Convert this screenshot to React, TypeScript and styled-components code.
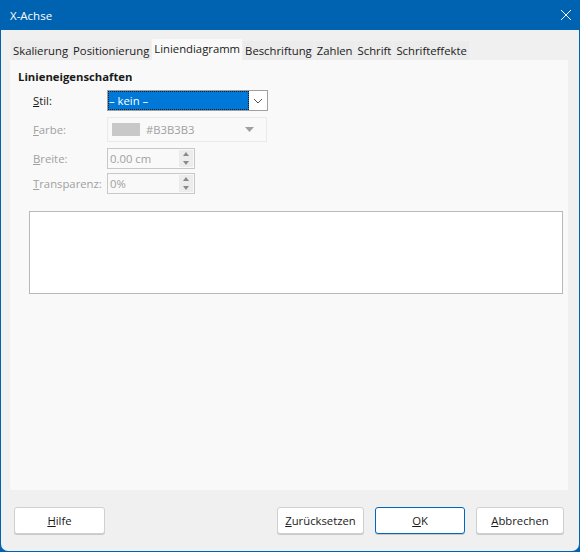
import React from 'react';
import styled, { createGlobalStyle } from 'styled-components';

const Global = createGlobalStyle`
  html, body { margin: 0; padding: 0; background: #0063b1; }
  body { font-family: 'Open Sans', 'Noto Sans', sans-serif; font-size: 11.3px; color: #1a1a1a; }
`;

const Frame = styled.div`
  width: 580px;
  height: 552px;
  box-sizing: border-box;
  display: flex;
  flex-direction: column;
  background: #0063b1;
  border-radius: 8px;
  overflow: hidden;
`;

const TitleBar = styled.div`
  height: 30px;
  flex: none;
  display: flex;
  align-items: center;
  justify-content: space-between;
  padding: 0 9px 0 10px;
  color: #fff;
  font-size: 11.5px;
`;

const Body = styled.div`
  flex: 1;
  margin: 0 1px 1px 1px;
  background: #f0f0f0;
  border-radius: 0 0 7px 7px;
  display: flex;
  flex-direction: column;
  padding: 10px 11px 0 9px;
`;

const TabRow = styled.div`
  display: flex;
  align-items: flex-end;
  height: 20px;
  padding-left: 1px;
`;

const Tab = styled.div<{ $active?: boolean }>`
  height: ${p => (p.$active ? '21px' : '19px')};
  line-height: ${p => (p.$active ? '20px' : '19px')};
  padding: 0 2px;
  margin-right: 1px;
  background: ${p => (p.$active ? '#f9f9f9' : '#ececec')};
  position: relative;
  z-index: ${p => (p.$active ? 1 : 0)};
  white-space: nowrap;
`;

const Panel = styled.div`
  height: 430px;
  background: #f9f9f9;
  padding: 9px 0 0 8px;
  box-sizing: border-box;
  display: flex;
  flex-direction: column;
`;

const Heading = styled.div`
  font-weight: 700;
  margin-bottom: 6px;
`;

const Grid = styled.div`
  display: grid;
  grid-template-columns: 74px auto;
  row-gap: 4px;
  padding-left: 15px;
  align-items: center;
  justify-items: start;
`;

const Label = styled.div<{ $disabled?: boolean }>`
  color: ${p => (p.$disabled ? '#a0a0a0' : '#1a1a1a')};
  u { text-decoration-thickness: 1px; }
`;

const Select = styled.div`
  width: 161px;
  height: 21px;
  box-sizing: border-box;
  border: 1px solid #a0a0a0;
  background: #fff;
  display: flex;
`;

const SelectValue = styled.div`
  flex: 1;
  background: #0078d7;
  color: #fff;
  outline: 1px dotted #1a1a1a;
  outline-offset: -1px;
  padding-left: 1px;
  line-height: 19px;
`;

const SelectButton = styled.div`
  width: 18px;
  display: flex;
  align-items: center;
  justify-content: center;
`;

const ColorBox = styled.div`
  width: 160px;
  height: 25px;
  margin: 2px 0;
  box-sizing: border-box;
  border: 1px solid #eaeaea;
  display: flex;
  align-items: center;
  padding: 0 12px 0 4px;
  gap: 6px;
  color: #a0a0a0;
`;

const Swatch = styled.div`
  width: 28px;
  height: 13px;
  background: #c8c8c8;
`;

const ColorName = styled.span`
  flex: 1;
`;

const Spin = styled.div`
  width: 88px;
  height: 21px;
  box-sizing: border-box;
  border: 1px solid #c8c8c8;
  background: #f9f9f9;
  display: flex;
  color: #a0a0a0;
`;

const SpinText = styled.div`
  flex: 1;
  padding-left: 2px;
  line-height: 19px;
`;

const SpinButtons = styled.div`
  width: 14px;
  margin: 1px;
  background: #ececec;
  display: flex;
  flex-direction: column;
  align-items: center;
  justify-content: space-around;
`;

const Preview = styled.div`
  margin: 17px 5px 0 11px;
  height: 81px;
  background: #fff;
  border: 1px solid #b9b9b9;
`;

const Footer = styled.div`
  flex: 1;
  display: flex;
  align-items: center;
  padding: 0 4px 0 4px;
  gap: 11px;
`;

const Spacer = styled.div`
  flex: 1;
`;

const Button = styled.div<{ $default?: boolean; $w: number }>`
  width: ${p => p.$w}px;
  height: 27px;
  box-sizing: border-box;
  border: 1px solid ${p => (p.$default ? '#0067c0' : '#d0d0d0')};
  border-radius: 3px;
  background: #fff;
  display: flex;
  align-items: center;
  justify-content: center;
  box-shadow: 0 1px 0 #c8c8c8;
`;

const Chevron = () => (
  <svg width="10" height="6" viewBox="0 0 10 6">
    <path d="M1 1l4 4 4-4" fill="none" stroke="#555" strokeWidth="1" />
  </svg>
);

const Up = () => (
  <svg width="6" height="4" viewBox="0 0 6 4"><path d="M0 4L3 0L6 4Z" fill="#8a8a8a" /></svg>
);
const Down = () => (
  <svg width="6" height="4" viewBox="0 0 6 4"><path d="M0 0L3 4L6 0Z" fill="#8a8a8a" /></svg>
);
const DropArrow = () => (
  <svg width="9" height="5" viewBox="0 0 9 5"><path d="M0 0L4.5 5L9 0Z" fill="#a0a0a0" /></svg>
);

const Close = () => (
  <svg width="10" height="10" viewBox="0 0 10 10">
    <path d="M0 0L10 10M10 0L0 10" stroke="#fff" strokeWidth="1" />
  </svg>
);

const tabs = ['Skalierung', 'Positionierung', 'Liniendiagramm', 'Beschriftung', 'Zahlen', 'Schrift', 'Schrifteffekte'];

const App = () => (
  <Frame>
    <Global />
    <TitleBar>
      <span>X-Achse</span>
      <Close />
    </TitleBar>
    <Body>
      <TabRow>
        {tabs.map(t => (
          <Tab key={t} $active={t === 'Liniendiagramm'}>{t}</Tab>
        ))}
      </TabRow>
      <Panel>
        <Heading>Linieneigenschaften</Heading>
        <Grid>
          <Label><u>S</u>til:</Label>
          <Select>
            <SelectValue>– kein –</SelectValue>
            <SelectButton><Chevron /></SelectButton>
          </Select>
          <Label $disabled><u>F</u>arbe:</Label>
          <ColorBox>
            <Swatch />
            <ColorName>#B3B3B3</ColorName>
            <DropArrow />
          </ColorBox>
          <Label $disabled><u>B</u>reite:</Label>
          <Spin>
            <SpinText>0.00 cm</SpinText>
            <SpinButtons><Up /><Down /></SpinButtons>
          </Spin>
          <Label $disabled><u>T</u>ransparenz:</Label>
          <Spin>
            <SpinText>0%</SpinText>
            <SpinButtons><Up /><Down /></SpinButtons>
          </Spin>
        </Grid>
        <Preview />
      </Panel>
      <Footer>
        <Button $w={91}><span><u>H</u>ilfe</span></Button>
        <Spacer />
        <Button $w={87}><span><u>Z</u>urücksetzen</span></Button>
        <Button $w={90} $default><span><u>O</u>K</span></Button>
        <Button $w={88}><span><u>A</u>bbrechen</span></Button>
      </Footer>
    </Body>
  </Frame>
);

export default App;
